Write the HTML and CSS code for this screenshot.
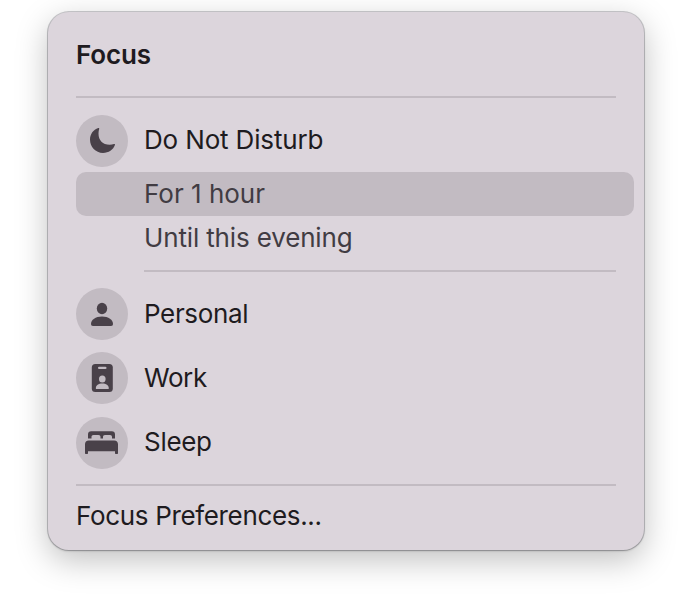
FILE: index.html
```html
<!DOCTYPE html>
<html lang="en">
<head>
  <meta charset="UTF-8" />
  <meta name="viewport" content="width=device-width, initial-scale=1.0"/>
  <title>Focus</title>
  <link rel="stylesheet" href="styles.css">
</head>
<body>

  <div class="panel">
    <h2>Focus</h2>

    <div class="modes">
      <div class="mode dnd">
        <span class="icon">
          <svg width="52" height="52" viewBox="0 0 52 52">
            <path d="M22.300 13C17.300 14.600 14 19.200 14 24.600C14 32 19.500 38 27 38C32.600 38 37.300 34.800 39 29.800C39.200 29 38.700 28.800 38 29C36.600 29.500 35.300 29.700 33.700 29.700C26.700 29.700 22.500 25.500 22.500 18.500C22.500 16.800 22.800 15.400 23.200 14.100C23.400 13.300 23 12.800 22.300 13Z"/>
          </svg>
        </span>
        <span class="label">Do Not Disturb</span>
      </div>

      <div class="option selected"><span class="label">For 1 hour</span></div>
      <div class="option"><span class="label">Until this evening</span></div>
      <div class="line"></div>

      <div class="mode personal">
        <span class="icon">
          <svg width="52" height="52" viewBox="0 0 52 52">
            <ellipse cx="26" cy="20.500" rx="5.200" ry="5.700"/>
            <path d="M15 35.800C15 31.800 19.500 28.400 26 28.400S37 31.800 37 35.800C37 37.200 36.300 38 35 38H17C15.700 38 15 37.200 15 35.800Z"/>
          </svg>
        </span>
        <span class="label">Personal</span>
      </div>

      <div class="mode work">
        <span class="icon">
          <svg width="52" height="52" viewBox="0 0 52 52">
            <rect x="15.800" y="12" width="21" height="28" rx="3.500"/>
            <rect class="cut" x="22" y="14.800" width="8.500" height="2.200" rx="1.100"/>
            <ellipse class="cut" cx="26.300" cy="27" rx="3.300" ry="3.500"/>
            <path class="cut" d="M19.800 36.200C19.800 33.500 22.500 31.600 26.300 31.600S32.800 33.500 32.800 36.200C32.800 36.800 32.500 37.100 31.900 37.100H20.700C20.100 37.100 19.800 36.800 19.800 36.200Z"/>
          </svg>
        </span>
        <span class="label">Work</span>
      </div>

      <div class="mode sleep">
        <span class="icon">
          <svg width="52" height="52" viewBox="0 0 52 52">
            <path d="M12 21.500V17.500C12 15.500 13.200 14.300 15.200 14.300H35.800C37.800 14.300 39 15.500 39 17.500V21.500H36V20C36 18.700 35.300 18 34 18H29C27.700 18 27 18.700 27 20V21.500H24.500V20C24.500 18.700 23.800 18 22.500 18H17.500C16.200 18 15.500 18.700 15.500 20V21.500Z"/>
            <path d="M9 27.300C9 24.800 10.400 23.400 12.800 23.400H38.200C40.600 23.400 42 24.800 42 27.300V36C42 36.700 41.700 37 41 37H40C39.300 37 39 36.700 39 36V34.200H12V36C12 36.700 11.700 37 11 37H10C9.300 37 9 36.700 9 36Z"/>
          </svg>
        </span>
        <span class="label">Sleep</span>
      </div>
    </div>

    <div class="footer"><span class="label">Focus Preferences...</span></div>
  </div>

</body>
</html>
```

FILE: styles.css
```css
body {
  box-sizing: border-box;
  min-height: 606px;
  margin: 0;
  padding: 12px 48px;
  background: #fff;
  font-family: Inter, sans-serif;
  font-size: 26px;
  color: #1e1b20;
}

.panel {
  box-sizing: border-box;
  width: 596px;
  height: 538px;
  padding: 0 10px 0 28px;
  border-radius: 21px;
  background: #dcd5dc;
  box-shadow: 0 0 0 1px rgba(90, 90, 100, 0.3), 0 1px 2px rgba(0, 0, 0, 0.25), 0 10px 32px rgba(0, 0, 0, 0.25);
}

h2 {
  display: flex;
  align-items: center;
  height: 84px;
  margin: 0 18px 0 0;
  border-bottom: 2px solid #c2bbc2;
  font-size: 26px;
  font-weight: 600;
  letter-spacing: -0.15px;
}

.modes {
  padding-top: 17px;
}

.mode {
  display: flex;
  align-items: center;
  gap: 16px;
  height: 52px;
  margin-bottom: 12px;
}

.label {
  padding-bottom: 2px;
  letter-spacing: -0.15px;
}

.dnd {
  margin-bottom: 5px;
}

.dnd .label {
  padding-bottom: 3px;
}

.personal .label {
  letter-spacing: -0.35px;
}

.work .label {
  letter-spacing: -0.4px;
}

.work {
  margin-bottom: 13px;
}

.sleep {
  margin-bottom: 0;
}

.sleep .label {
  padding-bottom: 3px;
  letter-spacing: -0.3px;
}

.icon {
  width: 52px;
  height: 52px;
  border-radius: 50%;
  background: #c2bbc2;
}

.icon svg {
  display: block;
  fill: #494149;
}

.icon .cut {
  fill: #c2bbc2;
}

.option {
  display: flex;
  align-items: center;
  height: 44px;
  padding-left: 68px;
  border-radius: 10px;
  color: #413c43;
}

.selected {
  background: #c2bbc2;
}

.selected .label {
  letter-spacing: 0;
}

.line {
  height: 2px;
  margin: 10px 18px 16px 68px;
  background: #c2bbc2;
}

.footer {
  display: flex;
  align-items: center;
  height: 60px;
  margin: 15px 18px 0 0;
  border-top: 2px solid #c2bbc2;
}

.footer .label {
  letter-spacing: -0.34px;
}
```
